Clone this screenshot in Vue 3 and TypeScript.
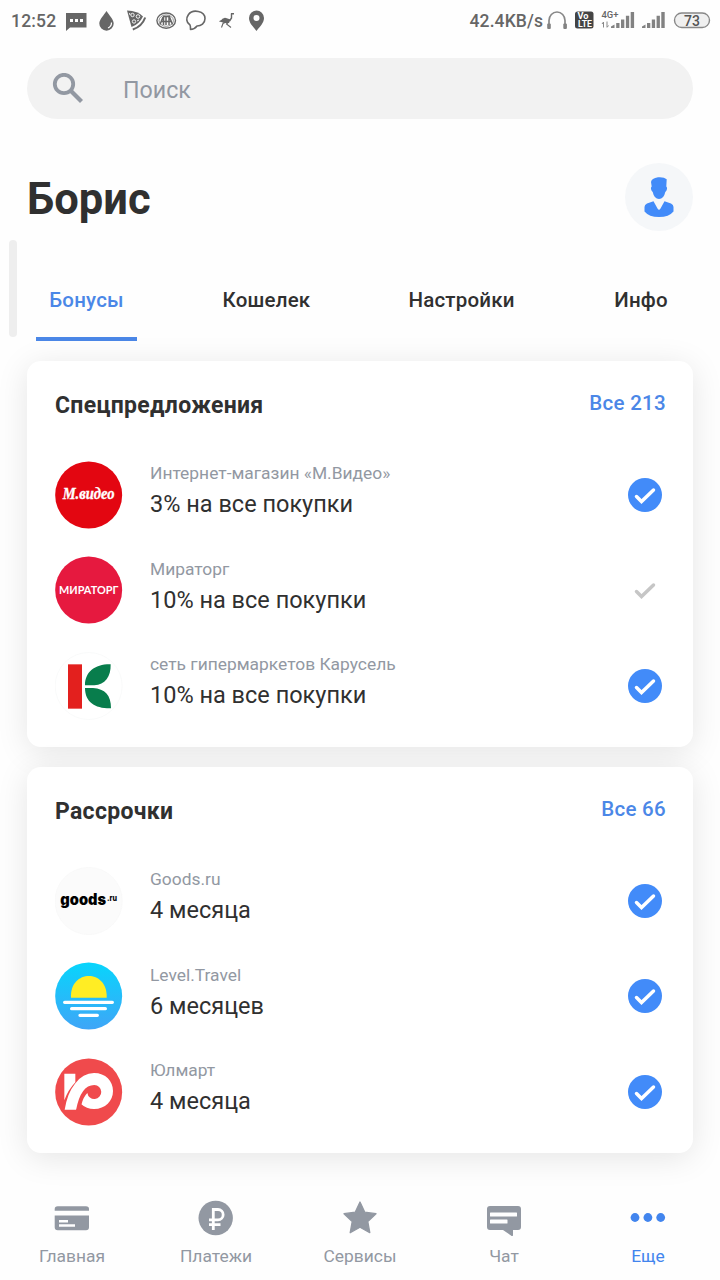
<script setup lang="ts">
interface Offer {
  brand: string
  text: string
  logo: 'mvideo' | 'miratorg' | 'karusel' | 'goods' | 'level' | 'ulmart'
  active: boolean
}
interface Section {
  title: string
  link: string
  offers: Offer[]
}

const tabs = [
  { id: 'bonus', label: 'Бонусы' },
  { id: 'wallet', label: 'Кошелек' },
  { id: 'settings', label: 'Настройки' },
  { id: 'info', label: 'Инфо' },
]

const sections: Section[] = [
  {
    title: 'Спецпредложения',
    link: 'Все 213',
    offers: [
      { brand: 'Интернет-магазин «М.Видео»', text: '3% на все покупки', logo: 'mvideo', active: true },
      { brand: 'Мираторг', text: '10% на все покупки', logo: 'miratorg', active: false },
      { brand: 'сеть гипермаркетов Карусель', text: '10% на все покупки', logo: 'karusel', active: true },
    ],
  },
  {
    title: 'Рассрочки',
    link: 'Все 66',
    offers: [
      { brand: 'Goods.ru', text: '4 месяца', logo: 'goods', active: true },
      { brand: 'Level.Travel', text: '6 месяцев', logo: 'level', active: true },
      { brand: 'Юлмарт', text: '4 месяца', logo: 'ulmart', active: true },
    ],
  },
]

const nav = [
  { id: 'home', label: 'Главная' },
  { id: 'pay', label: 'Платежи' },
  { id: 'services', label: 'Сервисы' },
  { id: 'chat', label: 'Чат' },
  { id: 'more', label: 'Еще' },
]
</script>

<template>
  <div class="screen">
    <header class="status">
      <span class="clock">12:52</span>
      <svg class="notifications" width="204" height="42" viewBox="64 0 204 42" fill="#666">
        <path fill-rule="evenodd" d="M66 13h20.500v14.500H70L66 31zM70 19v3h3v-3zm5 0v3h3v-3zm5 0v3h3v-3z" />
        <path d="M106.500 11c2.500 4 7.200 8.500 7.200 12.500a7.200 7.200 0 0 1-14.400 0c0-4 4.700-8.500 7.200-12.500z" />
        <path d="M111.500 22.500q0 4-3.500 5.500" fill="none" stroke="#fff" stroke-width="1.200" />
        <path d="M127 10.500Q138 11 143 16.500 139 24.500 131.500 27z" />
        <path d="M145.200 17.500Q142 26.500 132.800 29.500" fill="none" stroke="#666" stroke-width="2" />
        <g fill="none" stroke="#fff" stroke-width=".9">
          <circle cx="132.500" cy="15" r="1.700" />
          <circle cx="138" cy="16.500" r="1.800" />
          <circle cx="134" cy="21.500" r="1.700" />
          <path d="M137 21l2-1M129.500 13l.5 2" />
        </g>
        <g fill="none" stroke="#666">
          <ellipse cx="166.200" cy="20.600" rx="9.300" ry="7.600" stroke-width="1.400" />
          <ellipse cx="166.200" cy="20.600" rx="7.200" ry="5.700" stroke-width=".7" />
          <path d="M160 24.500l3-7.500M163.500 17v8M166 25v-9M169 16v9M169.500 17l3 7.500M163 16.500h7M161 21.500h11" stroke-width="1.500" />
          <path d="M191 28.500q0-2.500-.5-3.500c-4-2.500-4-7-1.500-10.500 4-5.500 16.500-4 16.500 4 0 5-4 7.500-8 7.500-1.500 2-4.500 3.500-6.500 3.500z" transform="translate(-.5 0)" stroke-width="1.600" stroke-linejoin="round" />
          <path d="M231 13.700h3M231.500 13.500v4.500l-2 3" stroke-width="1.400" />
          <path d="M228.500 22l-2 2 4.500 3.500M226 22l-3 1.500-1.500 4M219.500 21.500l2.500-1" stroke-width="1.100" />
        </g>
        <path d="M220 21.500q3-4.500 6-3.500l4.500 1.500-1.500 3.500h-5z" />
        <path fill-rule="evenodd" d="M256.500 10.500a7.500 7.500 0 0 1 7.500 7.500c0 5-4 8.500-7.500 13-3.500-4.500-7.500-8-7.500-13a7.500 7.500 0 0 1 7.500-7.500zm0 4.500a3 3 0 1 0 0 6 3 3 0 0 0 0-6z" />
      </svg>
      <span class="speed">42.4KB/s</span>
      <svg class="signals" width="170" height="42" viewBox="546 0 170 42" fill="#828282">
        <path d="M549 26v-5.500a8 8.500 0 0 1 16 0V26" fill="none" stroke="#888" stroke-width="1.700" />
        <rect x="547.200" y="23.500" width="3.600" height="5.500" rx="1" />
        <rect x="563.300" y="23.500" width="3.600" height="5.500" rx="1" />
        <rect x="575" y="11.500" width="18.500" height="17" rx="2.500" fill="#444" />
        <g font-family="Roboto, sans-serif" font-weight="700" fill="#fff">
          <text x="577.500" y="19.300" font-size="8.500" textLength="11" lengthAdjust="spacingAndGlyphs">Vo</text>
          <text x="578" y="27" font-size="8.500" textLength="14" lengthAdjust="spacingAndGlyphs">LTE</text>
        </g>
        <text x="601.500" y="17.800" font-family="Roboto, sans-serif" font-size="8.300" font-weight="500" fill="#666" textLength="17" lengthAdjust="spacingAndGlyphs">4G+</text>
        <path d="M603.500 27.500v-5.500M602 24l1.500-2M607 21.500v5.500M607 27.500l1.500-2" fill="none" stroke="#888" />
        <path d="M611 28v-1.500l3.500-2V28zM616.200 23h3.300v5h-3.300zM621 19.500h3.300V28H621zM625.900 15.700h3.300V28h-3.300zM630.700 12h3.400v16h-3.400z" />
        <path d="M642 28v-1.500l3.500-2V28zM647 23h3.300v5H647zM651.800 19.500h3.300V28h-3.300zM656.600 15.700h3.300V28h-3.300zM661.300 12h3.400v16h-3.400z" />
        <rect x="674.500" y="13" width="35" height="14.500" rx="7.250" fill="#f0f0f0" stroke="#888" stroke-width="1.400" />
        <text x="692" y="25.500" font-family="Roboto, sans-serif" font-size="14" font-weight="500" fill="#555" text-anchor="middle">73</text>
      </svg>
    </header>

    <div class="search">
      <svg width="32" height="32" viewBox="0 0 32 32" fill="none" stroke="#9298a2" stroke-width="3.800">
        <circle cx="12" cy="11" r="9.200" />
        <path d="M18.500 17.500L29.500 28.500" stroke-width="4.200" />
      </svg>
      <span>Поиск</span>
    </div>

    <div class="profile">
      <h1>Борис</h1>
      <div class="avatar">
        <svg width="30" height="40" viewBox="0 0 30 40" fill="#428bf9">
          <path d="M7 5Q7.500 1.500 14 .3q6-.5 8.700 2L22.300 9.500q1.400 1 .2 4l-1.200 1.500Q19.800 22 15 22T8.700 15l-1.200-1.500q-1.200-3 .2-4z" />
          <path d="M9.500 24.300L13.500 31.500q1.500 2.500 3 0l4-7.200 6.500 2.200q2.500 1 2.500 3.500v4.500Q25 40 15 40T.5 34.500V30q0-2.500 2.500-3.500z" />
        </svg>
      </div>
    </div>

    <nav class="tabs">
      <i class="scroll-mark" />
      <span v-for="(tab, i) in tabs" :key="tab.id" class="tab" :class="[tab.id, { current: i === 0 }]">{{ tab.label }}</span>
    </nav>

    <main class="cards">
      <section v-for="section in sections" :key="section.title" class="card">
        <div class="card-head">
          <h2>{{ section.title }}</h2>
          <a>{{ section.link }}</a>
        </div>
        <div v-for="offer in section.offers" :key="offer.brand" class="offer">
          <svg class="logo" width="68" height="68" viewBox="0 0 204 204">
            <template v-if="offer.logo === 'mvideo'">
              <circle cx="101" cy="102" r="100.500" fill="#e30611" />
              <text x="23" y="115" font-family="'Liberation Serif', serif" font-size="47" font-weight="700" font-style="italic" fill="#fff" stroke="#fff" stroke-width="1" textLength="156" lengthAdjust="spacingAndGlyphs">М.видео</text>
            </template>
            <template v-else-if="offer.logo === 'miratorg'">
              <circle cx="101" cy="102" r="100.500" fill="#e6193f" />
              <text x="12" y="114" font-family="Lato, 'Open Sans', sans-serif" font-size="31" font-weight="700" fill="#fff" textLength="178" lengthAdjust="spacingAndGlyphs">МИРАТОРГ</text>
            </template>
            <template v-else-if="offer.logo === 'karusel'">
              <circle cx="101" cy="102" r="100.500" fill="#fff" stroke="#f6f8f8" stroke-width="2" />
              <path d="M39 37h42v133H39z" fill="#e3201e" />
              <path d="M90 100C90 60 120 36 167 37c1 38-17 61-49 63zM90 108h24c36 2 54 22 54 61-48 1-78-19-78-61z" fill="#087d4c" />
            </template>
            <template v-else-if="offer.logo === 'goods'">
              <circle cx="101" cy="102" r="101" fill="#fbfbfb" stroke="#f7f7f7" stroke-width="2" />
              <text x="16" y="114" font-family="Inter, sans-serif" font-size="46" font-weight="900" textLength="137" lengthAdjust="spacingAndGlyphs">goods</text>
              <text x="156" y="101" font-family="Inter, sans-serif" font-size="23" font-weight="800" textLength="30" lengthAdjust="spacingAndGlyphs">.ru</text>
            </template>
            <template v-else-if="offer.logo === 'level'">
              <defs>
                <linearGradient id="sky" x1="0" y1="0" x2="0" y2="1">
                  <stop offset="0" stop-color="#08d5fc" />
                  <stop offset="1" stop-color="#3fa5f7" />
                </linearGradient>
              </defs>
              <circle cx="101" cy="102" r="100.500" fill="url(#sky)" />
              <path d="M48 107c-5-86 111-88 107 0z" fill="#ffed24" />
              <path d="M29 121h143M50 140h101M75 160h52" stroke="#fff" stroke-width="10" stroke-linecap="round" />
            </template>
            <template v-else>
              <circle cx="101" cy="102" r="100.500" fill="#f04a4c" />
              <path d="M28 47h33v26Q39 96 28 127z" fill="#fff" />
              <path d="M29 155Q37 105 60 77 84 45 117 45c35 0 57 24 57 54s-23 54-57 54q-23 0-38-14l-15 16z" fill="#fff" />
              <path d="M63 157Q77 81 118 81a21 21 0 1 1-21 24q-13 13-18 36l-13 16z" fill="#f04a4c" />
            </template>
          </svg>
          <div class="copy">
            <span class="brand">{{ offer.brand }}</span>
            <span class="deal">{{ offer.text }}</span>
          </div>
          <svg width="34" height="34" viewBox="0 0 34 34">
            <circle v-if="offer.active" cx="17" cy="17" r="17" fill="#428bf9" />
            <path d="M8.500 18.500l5 5L25.500 12" fill="none" :stroke="offer.active ? '#fff' : '#c6c6c6'" stroke-width="3.500" stroke-linecap="round" stroke-linejoin="miter" />
          </svg>
        </div>
      </section>
    </main>

    <footer class="bottom">
      <div v-for="item in nav" :key="item.id" class="item" :class="{ on: item.id === 'more' }">
        <svg width="36" height="36" viewBox="0 0 36 36" fill="currentColor">
          <template v-if="item.id === 'home'">
            <path d="M.7 10.800V9q0-2.700 3-2.700h28.300q3 0 3 2.700v1.800z" />
            <path fill-rule="evenodd" d="M.7 15.500H35v11.800q0 3-3 3H3.700q-3 0-3-3zM5 20v2.500h9V20zm0 4.300v2.500h16v-2.500z" />
          </template>
          <template v-else-if="item.id === 'pay'">
            <circle cx="17.700" cy="18" r="17.200" />
            <path d="M15.300 30V9.500h4.700a5 5 0 0 1 0 10.300h-9M11 24.700h11.500" fill="none" stroke="#fff" stroke-width="2.800" />
          </template>
          <path v-else-if="item.id === 'services'" d="M18 2l4.800 10.200 11.200 1.500-8.200 7.800 2 11.200L18 27.300l-9.800 5.400 2-11.200L2 13.700l11.200-1.500z" stroke="currentColor" stroke-width="1.300" stroke-linejoin="round" />
          <path v-else-if="item.id === 'chat'" fill-rule="evenodd" d="M4 6h28q3 0 3 3v18q0 3-3 3h-5v5.500q-1 1-2 0L17 30H4q-3 0-3-3V9q0-3 3-3zm0 7v3q0 .5.500.5h26q.5 0 .5-.5v-3q0-.5-.5-.5h-26Q4 12.500 4 13zm0 7v3q0 .5.500.5h16.500q.5 0 .5-.5v-3q0-.5-.5-.5h-16.500q-.5 0-.5.500z" />
          <template v-else>
            <circle cx="5" cy="17.500" r="4.400" />
            <circle cx="17.900" cy="17.500" r="4.400" />
            <circle cx="30.700" cy="17.500" r="4.400" />
          </template>
        </svg>
        <span>{{ item.label }}</span>
      </div>
    </footer>
  </div>
</template>

<style>
body {
  margin: 0;
  background: #fefefe;
}
</style>

<style scoped>
.screen {
  width: 720px;
  height: 1280px;
  overflow: hidden;
  display: flex;
  flex-direction: column;
  background: #fefefe;
  color: #303030;
  font-family: Roboto, sans-serif;
}
.status {
  height: 42px;
  display: flex;
  align-items: center;
  color: #666;
  font-size: 17.5px;
  font-weight: 500;
  flex: none;
}
.clock {
  width: 53px;
  padding-left: 11px;
  letter-spacing: 0.2px;
}
.speed {
  margin-left: auto;
  letter-spacing: 0.1px;
}
.signals {
  margin: 0 4px 0 3px;
}
.search {
  margin: 16px 27px 0;
  height: 61px;
  border-radius: 31px;
  background: #f2f2f2;
  display: flex;
  align-items: center;
  flex: none;
  color: #9298a2;
  font-size: 23.2px;
}
.search span {
  padding-top: 2px;
}
.search svg {
  margin: 0 39px 0 25px;
}
.profile {
  display: flex;
  align-items: center;
  justify-content: space-between;
  margin: 44px 27px 0;
  height: 68px;
  flex: none;
}
h1 {
  margin: 5px 0 0;
  font-size: 43.5px;
  line-height: 50px;
  font-weight: 700;
}
.avatar {
  width: 68px;
  height: 68px;
  border-radius: 50%;
  background: #f5f7f9;
  display: flex;
  align-items: center;
  justify-content: center;
}
.tabs {
  display: flex;
  height: 101px;
  margin-top: 9px;
  flex: none;
}
.scroll-mark {
  width: 8px;
  height: 97px;
  margin: 0 19px 0 9px;
  border-radius: 4px;
  background: #eee;
}
.tab {
  box-sizing: border-box;
  height: 101px;
  padding-top: 48px;
  font-size: 20.5px;
  line-height: 24px;
  font-weight: 500;
  letter-spacing: 0.2px;
  text-align: center;
}
.bonus {
  width: 101px;
}
.wallet {
  width: 117px;
  margin-left: 71px;
}
.settings {
  width: 133px;
  margin-left: 70px;
}
.info {
  width: 82px;
  margin-left: 72px;
}
.current {
  color: #4b87e7;
  border-bottom: 4px solid #4b87e7;
}
.cards {
  display: flex;
  flex-direction: column;
  gap: 20px;
  margin: 20px 27px 0;
}
.card {
  box-sizing: border-box;
  height: 386px;
  padding: 0 28px;
  border-radius: 14px;
  background: #fff;
  box-shadow: 0 5px 32px rgba(0, 0, 0, 0.1);
}
.card-head {
  display: flex;
  justify-content: space-between;
  height: 86px;
}
h2 {
  margin: 31px 0 0;
  font-size: 23px;
  letter-spacing: 0.3px;
  line-height: 28px;
  font-weight: 700;
}
.card-head a {
  margin: 28px -1px 0 0;
  color: #4b87e7;
  font-size: 20.5px;
  line-height: 28px;
  font-weight: 500;
  letter-spacing: 0.3px;
}
.offer {
  display: flex;
  align-items: center;
  height: 95.5px;
  padding-right: 3px;
}
.logo {
  flex: none;
}
.copy {
  display: flex;
  flex-direction: column;
  flex: 1;
  margin-left: 27px;
  margin-top: -8px;
}
.brand {
  font-size: 17.4px;
  line-height: 28px;
  color: #9298a2;
}
.deal {
  font-size: 23.5px;
  line-height: 35px;
}
.bottom {
  display: flex;
  margin-top: auto;
  height: 80px;
  flex: none;
}
.item {
  width: 144px;
  display: flex;
  flex-direction: column;
  align-items: center;
  color: #9298a2;
}
.item span {
  margin-top: 8px;
  font-size: 17.4px;
  line-height: 24px;
}
.item.on {
  color: #4285ee;
}
</style>
